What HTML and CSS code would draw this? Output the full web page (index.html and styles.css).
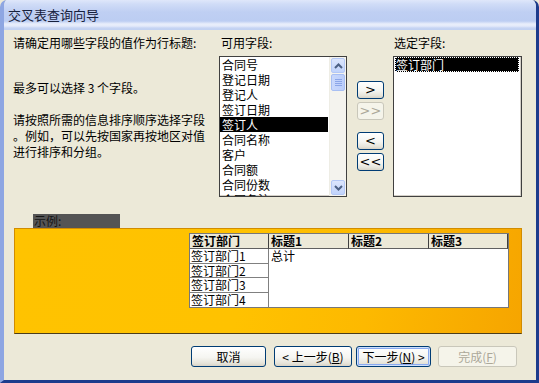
FILE: index.html
```html
<!DOCTYPE html>
<html lang="zh-CN">
<head>
    <meta charset="UTF-8">
    <title>交叉表查询向导</title>
    <link rel="stylesheet" href="styles.css">
</head>
<body>
    <div class="window">
        <div class="titlebar">交叉表查询向导</div>
        <div class="content">
            <div class="top">
                <div class="intro">
                    <p>请确定用哪些字段的值作为行标题:</p>
                    <p class="limit">最多可以选择 3 个字段。</p>
                    <p class="hint">请按照所需的信息排序顺序选择字段。例如，可以先按国家再按地区对值进行排序和分组。</p>
                </div>
                <div class="fields">
                    <div class="label">可用字段:</div>
                    <div class="listbox">
                        <div class="items">
                            <div class="item">合同号</div>
                            <div class="item">登记日期</div>
                            <div class="item">登记人</div>
                            <div class="item">签订日期</div>
                            <div class="item sel">签订人</div>
                            <div class="item">合同名称</div>
                            <div class="item">客户</div>
                            <div class="item">合同额</div>
                            <div class="item">合同份数</div>
                            <div class="item">合同备注</div>
                        </div>
                        <div class="scrollbar">
                            <div class="arrow">
                                <svg width="9" height="6" viewBox="0 0 9 6"><path d="M1 5 L4.5 1.5 L8 5" fill="none" stroke="#4d6185" stroke-width="2"/></svg>
                            </div>
                            <div class="thumb">
                                <span></span><span></span><span></span><span></span>
                            </div>
                            <div class="track"></div>
                            <div class="arrow">
                                <svg width="9" height="6" viewBox="0 0 9 6"><path d="M1 1 L4.5 4.5 L8 1" fill="none" stroke="#4d6185" stroke-width="2"/></svg>
                            </div>
                        </div>
                    </div>
                </div>
                <div class="movers">
                    <button class="btn small">&gt;</button>
                    <button class="btn small" disabled>&gt;&gt;</button>
                    <button class="btn small apart">&lt;</button>
                    <button class="btn small">&lt;&lt;</button>
                </div>
                <div class="chosen">
                    <div class="label">选定字段:</div>
                    <div class="listbox">
                        <div class="items">
                            <div class="item sel focus">签订部门</div>
                        </div>
                    </div>
                </div>
            </div>

            <div class="example-label">示例:</div>
            <div class="panel">
                <div class="grid">
                    <div class="head">签订部门</div>
                    <div class="head">标题1</div>
                    <div class="head">标题2</div>
                    <div class="head">标题3</div>
                    <div class="rowhead">签订部门1</div>
                    <div class="cells">总计</div>
                    <div class="rowhead">签订部门2</div>
                    <div class="rowhead">签订部门3</div>
                    <div class="rowhead">签订部门4</div>
                </div>
            </div>

            <div class="actions">
                <button class="btn cancel">取消</button>
                <button class="btn back">&lt; 上一步(<u>B</u>)</button>
                <button class="btn next default">下一步(<u>N</u>) &gt;</button>
                <button class="btn finish" disabled>完成(<u>F</u>)</button>
            </div>
        </div>
    </div>
</body>
</html>
```

FILE: styles.css
```css
* {
    box-sizing: border-box;
}
body {
    margin: 0;
    font-family: "Noto Sans CJK SC", sans-serif;
    font-size: 12px;
    color: #000;
    background: #ece9d8;
    overflow: hidden;
}
.window {
    width: 539px;
    height: 383px;
    display: flex;
    flex-direction: column;
    background: #ece9d8;
    border-left: 4px solid #8ea6e2;
    border-right: 3px solid #1d3b8c;
    border-bottom: 3px solid #1d3b8c;
    border-top-left-radius: 7px;
    border-top-right-radius: 7px;
    overflow: hidden;
}
.titlebar {
    height: 30px;
    padding: 6px 0 0 4px;
    font-size: 13px;
    line-height: 18px;
    color: #17213c;
    background: linear-gradient(#dfe7fa 0, #d0dcf7 4px, #bfcff3 12px, #bccdf2 21px, #e9eefb 24px, #e4eafa 26px, #c6d4f3 28px, #c0d0f2 30px);
}
.content {
    flex: 1;
    padding: 6px 0 0 9px;
}

/* upper part: text, lists, move buttons */
.top {
    display: flex;
    align-items: flex-start;
}
.intro {
    width: 206px;
}
.intro p {
    margin: 0;
    line-height: 14px;
}
.intro .limit {
    margin-top: 31px;
}
.intro .hint {
    margin-top: 17px;
    width: 194px;
    line-height: 16px;
    line-break: anywhere;
}
.label {
    line-height: 14px;
    padding-left: 2px;
}
.fields {
    width: 128px;
}
.chosen {
    width: 129px;
    margin-left: 9px;
}
.chosen .label {
    padding-left: 1px;
}
.listbox {
    display: flex;
    height: 141px;
    margin-top: 6px;
    background: #fff;
    border: 1px solid #404040;
    box-shadow: inset -1px -1px 0 #d4d0c8;
    overflow: hidden;
}
.items {
    flex: 1;
    padding-right: 1px;
}
.item {
    height: 15px;
    line-height: 15px;
    padding-left: 2px;
    white-space: nowrap;
}
.item.sel {
    background: #000;
    color: #fff;
}
.item.focus {
    outline: 1px dotted #fff;
    outline-offset: -1px;
    margin: 0 1px;
    padding-left: 1px;
}
.scrollbar {
    width: 17px;
    display: flex;
    flex-direction: column;
    padding: 1px 0 1px 0;
    background: #f4f3ee;
    border-left: 1px solid #eeede5;
}
.arrow {
    height: 15px;
    margin: 0 1px;
    display: flex;
    align-items: center;
    justify-content: center;
    background: linear-gradient(#dce6fd, #c1d3fb);
    border: 1px solid #b4c8f6;
    border-radius: 2px;
}
.thumb {
    height: 17px;
    margin: 1px 1px 0;
    display: flex;
    flex-direction: column;
    align-items: center;
    justify-content: center;
    gap: 1px;
    background: linear-gradient(90deg, #c9d8fc, #bccefa);
    border: 1px solid #a8bff3;
    border-radius: 2px;
}
.thumb span {
    width: 7px;
    height: 1px;
    background: #8ca6e8;
}
.track {
    flex: 1;
}
.movers {
    width: 27px;
    margin-left: 10px;
    padding-top: 45px;
    display: flex;
    flex-direction: column;
    gap: 3px;
}
.movers .apart {
    margin-top: 9px;
}

/* buttons */
.btn {
    font-family: "Noto Sans CJK SC", sans-serif;
    font-size: 12px;
    color: #000;
    padding: 0;
    height: 21px;
    border: 1px solid #003c74;
    border-radius: 3px;
    background: linear-gradient(#ffffff, #f5f5f1 55%, #e6e4da 85%, #d8d3c7);
}
.btn u {
    text-decoration: underline;
}
.btn:disabled {
    color: #aca899;
    border-color: #c9c7ba;
    background: #f5f4ea;
}
.btn.small {
    width: 27px;
    height: 18px;
    font-family: "DejaVu Sans", sans-serif;
    font-size: 13px;
    line-height: 14px;
}
.btn.default {
    box-shadow: inset 0 0 0 1px #cfe0fb, inset 0 0 0 2px #8aaaf0;
}

/* example preview */
.example-label {
    width: 87px;
    height: 14px;
    margin: 17px 0 0 20px;
    padding-left: 1px;
    line-height: 14px;
    color: #141414;
    background: #545454;
}
.panel {
    width: 508px;
    height: 106px;
    margin-left: 1px;
    padding: 4px 0 0 174px;
    border: 1px solid #d18c00;
    border-bottom-color: #4b3d1a;
    background: linear-gradient(100deg, #ffc300 0%, #ffc200 45%, #fdb900 70%, #f6a500 100%);
}
.grid {
    display: grid;
    grid-template-columns: 79px 80px 80px 79px;
    grid-template-rows: 15px 15px 14px 15px 14px;
    width: 320px;
    background: #fff;
    border: 1px solid #777;
}
.head {
    padding-left: 2px;
    line-height: 13px;
    font-weight: bold;
    background: #ece9d8;
    border-right: 1px solid #404040;
    border-bottom: 1px solid #606060;
}
.rowhead {
    grid-column: 1;
    padding-left: 1px;
    line-height: 13px;
    border-right: 1px solid #808080;
    border-bottom: 1px solid #808080;
}
.rowhead:last-child {
    border-bottom: none;
}
.cells {
    grid-column: 2 / 5;
    grid-row: 2 / 6;
    padding-left: 2px;
    line-height: 14px;
}

.actions {
    display: flex;
    margin: 12px 0 0 178px;
}
.cancel {
    width: 75px;
}
.back {
    width: 78px;
    margin-left: 8px;
}
.next {
    width: 75px;
    margin-left: 4px;
}
.finish {
    width: 79px;
    margin-left: 7px;
}
```
